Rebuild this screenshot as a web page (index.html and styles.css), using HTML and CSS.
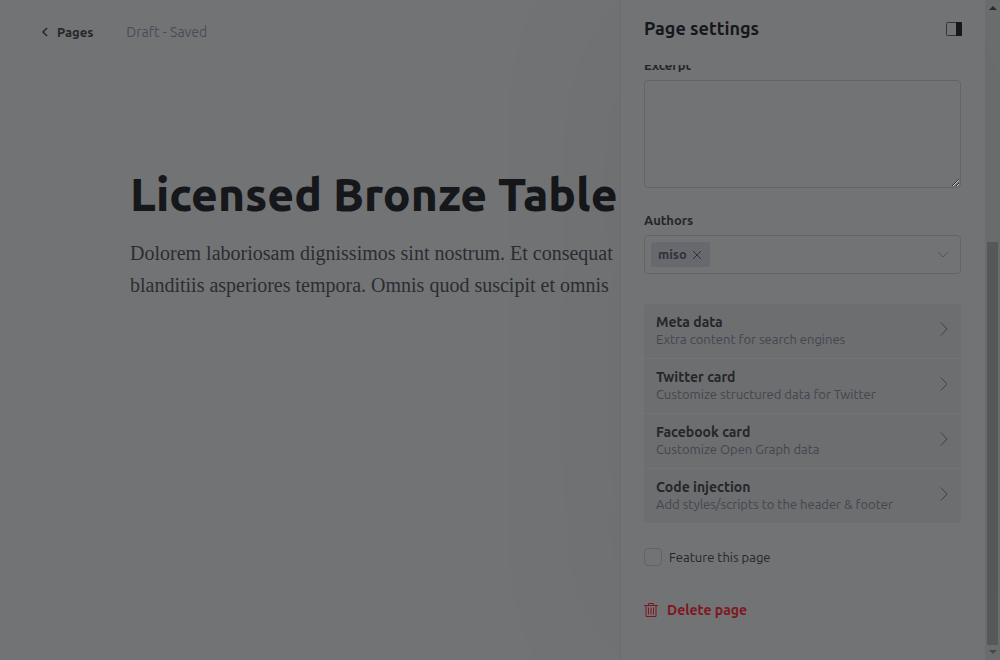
FILE: index.html
```html
<!DOCTYPE html>
<html lang="en">
<head>
<meta charset="utf-8">
<title>Page settings</title>
<link rel="stylesheet" href="styles.css">
</head>
<body>
<div class="app">
  <main class="editor">
    <header class="editor-header">
      <a class="back" href="#"><svg width="6" height="10" viewBox="0 0 6 10"><path d="M5 1 1 5l4 4"/></svg>Pages</a>
      <span class="status">Draft - Saved</span>
    </header>
    <article class="post">
      <h1 class="post-title">Licensed Bronze Table</h1>
      <p class="post-body">Dolorem laboriosam dignissimos sint nostrum. Et consequat<br>blanditiis asperiores tempora. Omnis quod suscipit et omnis</p>
    </article>
  </main>
  <aside class="panel">
    <header class="panel-header">
      <h2 class="panel-title">Page settings</h2>
      <button class="toggle" type="button" aria-label="Close settings"><svg width="16" height="14" viewBox="0 0 16 14"><rect class="frame" x=".5" y=".5" width="15" height="13" rx="1"/><path class="side" d="M10 0h5a1 1 0 0 1 1 1v12a1 1 0 0 1-1 1h-5z"/></svg></button>
    </header>
    <div class="panel-scroll">
      <form class="form">
        <label class="label" for="excerpt">Excerpt</label>
        <textarea class="excerpt" id="excerpt"></textarea>
        <span class="label">Authors</span>
        <div class="authors">
          <span class="token"><span class="token-name">miso</span><button class="remove" type="button" aria-label="Remove miso"><svg width="10" height="10" viewBox="0 0 10 10"><path d="m1 1 8 8M9 1 1 9"/></svg></button></span>
          <svg class="caret" width="10" height="6" viewBox="0 0 10 6"><path d="m.5.5 4.500 4.500L9.500.5"/></svg>
        </div>
        <ul class="menu">
          <li><button class="item" type="button"><span class="item-text"><b>Meta data</b><span>Extra content for search engines</span></span><svg class="arrow" width="8" height="14" viewBox="0 0 8 14"><path d="m.8.5 6.200 6.500-6.200 6.500"/></svg></button></li>
          <li><button class="item" type="button"><span class="item-text"><b>Twitter card</b><span>Customize structured data for Twitter</span></span><svg class="arrow" width="8" height="14" viewBox="0 0 8 14"><path d="m.8.5 6.200 6.500-6.200 6.500"/></svg></button></li>
          <li><button class="item" type="button"><span class="item-text"><b>Facebook card</b><span>Customize Open Graph data</span></span><svg class="arrow" width="8" height="14" viewBox="0 0 8 14"><path d="m.8.5 6.200 6.500-6.200 6.500"/></svg></button></li>
          <li><button class="item" type="button"><span class="item-text"><b>Code injection</b><span>Add styles/scripts to the header &amp; footer</span></span><svg class="arrow" width="8" height="14" viewBox="0 0 8 14"><path d="m.8.5 6.200 6.500-6.200 6.500"/></svg></button></li>
        </ul>
        <label class="feature"><input class="check" type="checkbox">Feature this page</label>
        <button class="delete" type="button"><svg width="14" height="14" viewBox="0 0 14 14"><path d="M0 2.500h14M4.500 2.500v-2h5v2M2 2.500v11h10v-11M4.500 4.500v7M7 4.500v7M9.500 4.500v7"/></svg>Delete page</button>
      </form>
    </div>
  </aside>
  <div class="scrollbar" aria-hidden="true">
    <svg class="up" width="8" height="4" viewBox="0 0 8 4"><path d="M0 4 4 0l4 4z"/></svg>
    <div class="track"><div class="thumb"></div></div>
    <svg class="down" width="8" height="4" viewBox="0 0 8 4"><path d="m0 0 4 4 4-4z"/></svg>
  </div>
</div>
</body>
</html>
```
FILE: styles.css
```css
* { box-sizing: border-box; }
body {
  margin: 0;
  background: #727375;
  color: #24262a;
  font: 13px/18px Ubuntu, "Noto Sans", sans-serif;
}
button { padding: 0; border: 0; background: none; color: inherit; font: inherit; }
svg { display: block; flex: none; fill: none; stroke: currentColor; }
.app { display: flex; height: 100vh; overflow: hidden; }

.editor { flex: 1; min-width: 0; overflow: hidden; white-space: nowrap; }
.editor-header { display: flex; gap: 33px; padding: 23px 42px; }
.back { display: flex; align-items: center; gap: 9px; color: #24262a; font-weight: 700; text-decoration: none; }
.back svg { stroke-width: 1.5; }
.status { color: #474d56; font-size: 14px; }
.post { padding: 97px 0 0 130px; }
.post-title { margin: 0; color: #15171a; font-size: 46px; line-height: 66px; font-weight: 800; }
.post-body { margin: 10px 0 0; color: #2b2d32; font: 20px/32px "Liberation Serif", serif; }

.panel {
  display: flex;
  flex-direction: column;
  position: relative;
  width: 365px;
  border-left: 1px solid #6b6c6e;
  background: #727375;
  box-shadow: -16px 0 160px rgba(0, 0, 0, .04);
}
.panel-header { display: flex; align-items: center; justify-content: space-between; flex: none; height: 65px; padding: 0 23px 8px 23px; }
.panel-title { margin: 0; padding-bottom: 2px; color: #15171a; font-size: 18px; line-height: 24px; font-weight: 700; }
.toggle { color: #33353a; }
.toggle .side { fill: #15171a; stroke: none; }
.panel-scroll { flex: 1; min-height: 0; overflow: hidden; }
.form { display: flex; flex-direction: column; margin-top: -9px; padding: 0 24px 0 23px; }
.label { margin-bottom: 6px; font-weight: 600; }
.excerpt { height: 108px; margin-bottom: 23px; border: 1px solid #626467; border-radius: 4px; background: transparent; font: inherit; resize: vertical; }
.authors { display: flex; align-items: center; justify-content: space-between; height: 39px; margin-bottom: 30px; padding: 0 12px 0 6px; border: 1px solid #626467; border-radius: 4px; }
.token { display: flex; align-items: center; gap: 5px; height: 25px; padding: 0 8px 0 7px; border-radius: 3px; background: #67696f; color: #303237; font-weight: 700; }
.token-name { padding-bottom: 2px; }
.caret { color: #505358; }
.menu { margin: 0 0 25px; padding: 0; border-radius: 4px; background: #6d6e70; list-style: none; }
.menu li + li { border-top: 1px solid #727375; }
.item { display: flex; align-items: center; justify-content: space-between; width: 100%; height: 54px; padding: 0 13px 4px 12px; text-align: left; }
.item-text { display: flex; flex-direction: column; padding-top: 2px; color: #40474f; font-size: 13px; line-height: 17px; }
.item-text b { color: #24262a; font-size: 14px; line-height: 18px; font-weight: 700; }
.arrow { color: #3c424a; }
.feature { display: flex; align-items: center; gap: 7px; margin-bottom: 34px; }
.check { appearance: none; width: 18px; height: 18px; margin: 0; border: 1px solid #626467; border-radius: 4px; }
.delete { display: flex; align-items: center; align-self: flex-start; gap: 9px; color: #7f1721; font-size: 14px; line-height: 20px; font-weight: 700; }

.scrollbar { display: flex; flex-direction: column; align-items: center; width: 15px; padding: 6px 0; background: #6c6d6f; }
.scrollbar svg { stroke: none; fill: #2a2b2c; }
.scrollbar .down { fill: #48494a; }
.track { display: flex; flex: 1; flex-direction: column; justify-content: flex-end; margin: 5px 0; }
.thumb { width: 11px; height: 61vh; background: #58595b; }
```
